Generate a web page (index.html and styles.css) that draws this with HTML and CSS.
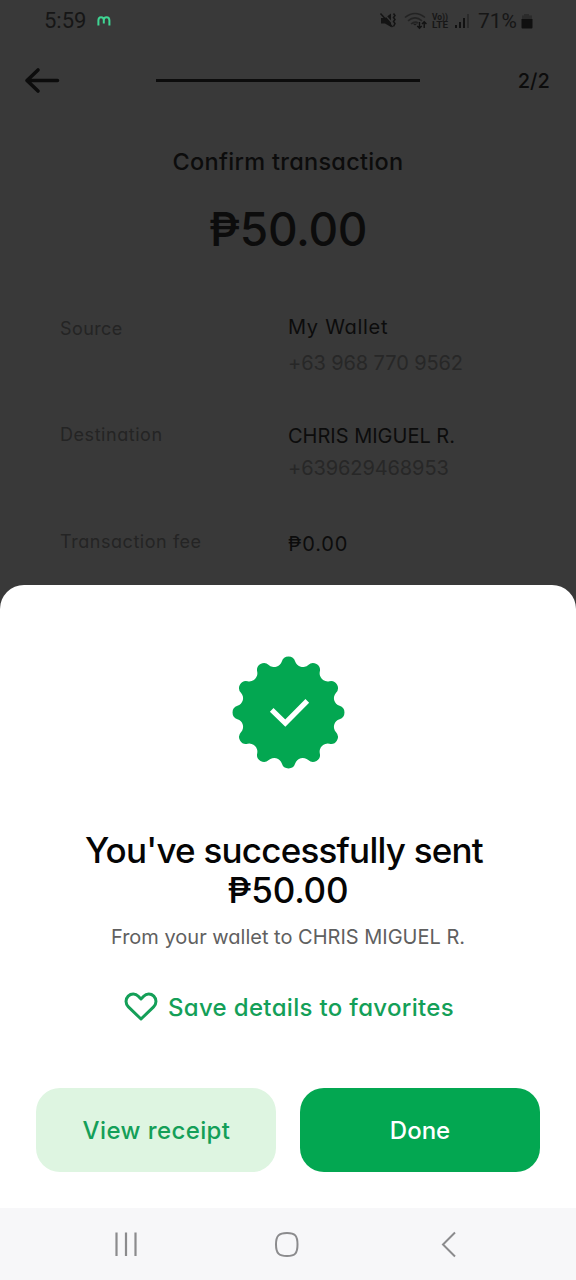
FILE: index.html
```html
<!DOCTYPE html>
<html lang="en">
<head>
<meta charset="utf-8">
<title>Confirm transaction</title>
<link rel="stylesheet" href="styles.css">
</head>
<body>
<div class="screen">
  <div class="status">
    <span class="clock">5:59</span>
    <svg class="app-mark" width="14" height="12" viewBox="0 0 14 12"><path d="M1.4 10.5V5.5Q1.4 2.2 4 2.2Q6.8 2.2 6.8 5V8.5V5Q6.8 2.2 9.5 2.2Q12.4 2.2 12.4 5.5V10.5" fill="none" stroke="#3fd593" stroke-width="2"/></svg>
    <svg class="status-icons" width="92" height="20" viewBox="0 0 92 20">
      <path d="M2 7H6L12 2.5V16L6 12.5H2Z" fill="#141414"/>
      <path d="M3.5 1L15.5 14.5" fill="none" stroke="#393939" stroke-width="1.3"/>
      <path d="M1.5 2.5L13.5 16M14.5 2.5L16 4.5L14.5 6.5L16 8.5L14.5 10.5L16 12.5L14.5 15.5" fill="none" stroke="#141414" stroke-width="1.5"/>
      <g fill="none" stroke="#232323" stroke-width="1.6">
        <path d="M26 6.5Q36 -1.5 46 6.5M29 9.8Q36 4 43 9.8M32 13Q36 9.8 39 12"/>
      </g>
      <path d="M36 14.5L33.8 12.8H38.2Z" fill="#1b1b1b"/>
      <path d="M40.5 11V17M38.3 15L40.5 17.2L42.7 15M45.2 17V11M43 13L45.2 10.8L47.4 13" fill="none" stroke="#121212" stroke-width="1.4"/>
      <text class="volte" x="53" y="9" textLength="16" lengthAdjust="spacingAndGlyphs">Vo))</text>
      <text class="volte" x="53" y="17.4" textLength="16" lengthAdjust="spacingAndGlyphs">LTE</text>
      <path d="M76 14H78V17H76ZM80 11H82V17H80ZM84 7H86V17H84Z" fill="#121212"/>
      <path d="M88 3H90V17H88Z" fill="#2a2a2a"/>
    </svg>
    <span class="battery">71%</span>
    <svg class="battery-icon" width="12" height="17" viewBox="0 0 12 17"><path d="M3 1H8V2.5H11V6.5H1V2.5H3Z" fill="#2b2b2b"/><path d="M0.5 6H11.5V14.5Q11.5 15.5 10.5 15.5H1.5Q.5 15.5 .5 14.5Z" fill="#101010"/></svg>
  </div>
  <div class="header">
    <svg width="36" height="28" viewBox="0 0 36 28"><path d="M33.5 13.5H3M14 3L3 13.5L14 24" fill="none" stroke="#0c0c0c" stroke-width="3.6" stroke-linecap="round" stroke-linejoin="round"/></svg>
    <div class="progress"></div>
    <span class="step">2/2</span>
  </div>
  <div class="heading">Confirm transaction</div>
  <div class="amount">₱50.00</div>
  <div class="details">
    <div class="label source">Source</div>
    <div class="value"><div class="name wallet">My Wallet</div><div class="phone first-phone">+63 968 770 9562</div></div>
    <div class="label destination">Destination</div>
    <div class="value"><div class="name recipient">CHRIS MIGUEL R.</div><div class="phone second-phone">+639629468953</div></div>
    <div class="label fee">Transaction fee</div>
    <div class="value"><div class="name fee-value">₱0.00</div></div>
  </div>
  <div class="sheet">
    <svg class="badge" width="114" height="114" viewBox="-57.5 -57.5 114 114">
      <path fill="#03a751" d="M-6.68-51.06A7 7 0 0 1 6.68-51.06A8 8 0 0 0 19.75-47.56A7 7 0 0 1 31.32-40.88A8 8 0 0 0 40.88-31.32A7 7 0 0 1 47.56-19.75A8 8 0 0 0 51.06-6.68A7 7 0 0 1 51.06 6.68A8 8 0 0 0 47.56 19.75A7 7 0 0 1 40.88 31.32A8 8 0 0 0 31.32 40.88A7 7 0 0 1 19.75 47.56A8 8 0 0 0 6.68 51.06A7 7 0 0 1-6.68 51.06A8 8 0 0 0-19.75 47.56A7 7 0 0 1-31.32 40.88A8 8 0 0 0-40.88 31.32A7 7 0 0 1-47.56 19.75A8 8 0 0 0-51.06 6.68A7 7 0 0 1-51.06-6.68A8 8 0 0 0-47.56-19.75A7 7 0 0 1-40.88-31.32A8 8 0 0 0-31.32-40.88A7 7 0 0 1-19.75-47.56A8 8 0 0 0-6.68-51.06Z"/>
      <path d="M-16.8-2.6L-3.2 10.5L18.8-11.7" fill="none" stroke="#fff" stroke-width="5.2"/>
    </svg>
    <div class="title"><div class="title-top">You've successfully sent</div><div class="title-sum">₱50.00</div></div>
    <div class="subtitle">From your wallet to CHRIS MIGUEL R.</div>
    <div class="favorite">
      <svg width="34" height="30" viewBox="0 0 34 30"><path d="M17 27L4.4 14.8C1.3 11.8 1.3 7 4.2 4.1C7.1 1.3 11.6 1.4 14.3 4.2L17 7L19.7 4.2C22.4 1.4 26.9 1.3 29.8 4.1C32.7 7 32.7 11.8 29.6 14.8Z" fill="none" stroke="#149f58" stroke-width="3" stroke-linejoin="round"/></svg>
      <span class="favorite-text">Save details to favorites</span>
    </div>
    <div class="actions">
      <div class="button receipt"><span>View receipt</span></div>
      <div class="button done"><span>Done</span></div>
    </div>
  </div>
  <div class="nav">
    <svg width="26" height="28" viewBox="0 0 26 28"><path d="M2.5 2.5V26M12 2.5V26M21.5 2.5V26" stroke="#8b8b8d" stroke-width="2.2"/></svg>
    <svg width="26" height="28" viewBox="0 0 26 28"><path d="M12 3C20 3 22.5 5.5 22.5 14.5S20 26 12 26S1 23.5 1 14.5S4 3 12 3Z" fill="none" stroke="#8b8b8d" stroke-width="2"/></svg>
    <svg width="26" height="28" viewBox="0 0 26 28"><path d="M19 2.5L7 14.5L19 26.5" fill="none" stroke="#8b8b8d" stroke-width="2"/></svg>
  </div>
</div>
</body>
</html>
```
FILE: styles.css
```css
* { box-sizing: border-box; }
body { margin: 0; font-family: Inter, "Noto Sans", sans-serif; font-feature-settings: "cv11"; background: #393939; }
svg { display: block; flex: none; }
.screen { width: 576px; height: 1280px; overflow: hidden; display: flex; flex-direction: column; background: #393939; color: #0c0c0c; white-space: nowrap; }
.status { height: 42px; display: flex; align-items: center; padding: 0 43px 0 44px; font-family: Roboto, sans-serif; font-size: 21px; color: #161616; }
.clock { font-size: 22px; margin-top: -1px; }
.app-mark { margin-left: 11px; }
.status-icons { margin-left: auto; }
.volte { font: 700 9px Roboto, sans-serif; fill: #171717; }
.battery { margin: 0 4px 0 7px; }
.header { height: 77px; display: flex; align-items: center; padding: 0 26px 0 24px; }
.progress { width: 264px; height: 3px; margin-left: 96px; background: #0c0c0c; }
.step { margin-left: auto; padding-top: 1px; font-size: 20px; font-weight: 500; letter-spacing: 0.1px; }
.heading { margin-top: 28px; line-height: 30px; font-size: 23.5px; font-weight: 500; letter-spacing: 0.3px; text-align: center; }
.amount { margin-top: 24px; line-height: 56px; font-size: 46px; font-weight: 500; letter-spacing: -0.3px; text-align: center; }
.details { height: 272px; margin-top: 56px; padding: 0 60px; display: grid; grid-template-columns: 228px 1fr; grid-template-rows: 108px 107px 57px; line-height: 28px; }
.label { font-size: 18px; letter-spacing: 0.55px; color: #242424; }
.source { padding-top: 2px; letter-spacing: 0.4px; }
.name { font-size: 20px; }
.wallet { letter-spacing: 0.7px; }
.phone { font-size: 20px; letter-spacing: -0.1px; color: #272727; }
.first-phone { margin-top: 8px; }
.recipient, .fee-value { padding-top: 1px; }
.fee-value { padding-top: 2px; letter-spacing: 0.9px; }
.second-phone { margin-top: 4px; }
.sheet { height: 623px; flex: none; border-radius: 24px 24px 0 0; background: #fff; display: flex; flex-direction: column; align-items: center; padding-top: 70px; }
.title { margin-top: 61px; font-size: 35px; line-height: 40px; font-weight: 500; color: #050505; text-align: center; }
.title-top { width: 408px; padding-right: 8px; letter-spacing: -0.77px; }
.title-sum { letter-spacing: -0.2px; }
.subtitle { margin-top: 13px; line-height: 28px; font-size: 20px; color: #606060; }
.favorite { height: 32px; margin-top: 40px; display: flex; align-items: center; gap: 10px; padding-left: 2px; font-size: 24px; font-weight: 500; letter-spacing: 0.33px; color: #149f58; }
.actions { width: 504px; margin-top: 65px; display: grid; grid-template-columns: 1fr 1fr; gap: 24px; }
.button { height: 84px; border-radius: 24px; display: flex; align-items: center; justify-content: center; font-size: 24px; font-weight: 500; }
.receipt { background: #def5e1; color: #149f58; letter-spacing: 0.4px; }
.receipt span { padding-left: 1px; }
.done { background: #03a751; color: #fff; }
.nav { height: 72px; flex: none; background: #f7f7f9; display: flex; align-items: center; justify-content: space-between; padding: 0 114px; }
```
